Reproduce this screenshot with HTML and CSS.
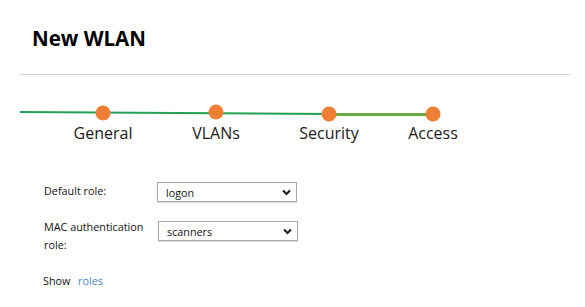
FILE: index.html
```html
<!DOCTYPE html>
<html>
<head>
<meta charset="utf-8">
<link rel="stylesheet" href="styles.css">
</head>
<body>
<div class="page">
  <h1 class="title">New WLAN</h1>
  <div class="rule"></div>
  <div class="stepper">
    <svg class="track" width="585" height="24" viewBox="0 0 585 24">
      <line x1="20" y1="11" x2="329" y2="13" stroke="#23a255" stroke-width="2"/>
      <line x1="329" y1="13.5" x2="433" y2="13.5" stroke="#6aab47" stroke-width="3"/>
      <circle cx="103" cy="12" r="7.5" fill="#ef7f35"/>
      <circle cx="216" cy="11" r="7.5" fill="#ef7f35"/>
      <circle cx="329" cy="13" r="7.5" fill="#ef7f35"/>
      <circle cx="433" cy="13" r="7.5" fill="#ef7f35"/>
    </svg>
    <div class="labels">
      <span class="step s1">General</span>
      <span class="step s2">VLANs</span>
      <span class="step s3">Security</span>
      <span class="step s4">Access</span>
    </div>
  </div>
  <div class="form">
    <div class="row">
      <label class="lbl">Default role:</label>
      <div class="sel">
        <select><option>logon</option></select>
        <svg class="chev" width="9" height="7" viewBox="0 0 9 7"><path d="M1 1.5 L4.5 5 L8 1.5" fill="none" stroke="#222" stroke-width="2.2"/></svg>
      </div>
    </div>
    <div class="row row2">
      <label class="lbl">MAC authentication role:</label>
      <div class="sel sel2">
        <select><option>scanners</option></select>
        <svg class="chev" width="9" height="7" viewBox="0 0 9 7"><path d="M1 1.5 L4.5 5 L8 1.5" fill="none" stroke="#222" stroke-width="2.2"/></svg>
      </div>
    </div>
    <div class="show"><span class="show-txt">Show</span><a class="link" href="#">roles</a></div>
  </div>
</div>
</body>
</html>
```
FILE: styles.css
```css
html, body {
  margin: 0;
  padding: 0;
  background: #fff;
}
.page {
  width: 585px;
  height: 307px;
  font-family: "Open Sans", "Noto Sans", sans-serif;
  color: #111;
  overflow: hidden;
}
.title {
  margin: 0;
  padding: 24px 0 0 32px;
  font-size: 20.5px;
  line-height: 28px;
  font-weight: 700;
  color: #000;
}
.rule {
  margin: 22px 15px 0 20px;
  height: 1px;
  background: #d2d2d2;
}
.stepper {
  margin-top: 26px;
}
.track {
  display: block;
}
.labels {
  display: flex;
  height: 22px;
  margin-top: -3px;
}
.step {
  display: block;
  width: 100px;
  text-align: center;
  font-size: 16px;
  line-height: 22px;
  color: #1a1a1a;
}
.s1 { margin-left: 53px; }
.s2 { margin-left: 13px; }
.s3 { margin-left: 13px; }
.s4 { margin-left: 4px; }
.form {
  padding: 38px 0 0 44px;
  font-family: "Open Sans", "Noto Sans", sans-serif;
  font-size: 10.8px;
}
.row {
  display: flex;
  align-items: flex-start;
}
.lbl {
  width: 113px;
  line-height: 18px;
}
.row2 {
  margin-top: 16px;
}
.row2 .lbl {
  width: 110px;
}
.sel {
  position: relative;
  width: 140px;
  height: 20px;
}
.sel2 {
  margin-left: 4px;
  margin-top: 3px;
}
.sel select {
  appearance: none;
  -webkit-appearance: none;
  width: 140px;
  height: 20px;
  margin: 0;
  padding: 0 0 0 8px;
  border: 1px solid #a8a8a8;
  border-radius: 0;
  background: #fff;
  font-family: "Open Sans", "Noto Sans", sans-serif;
  font-size: 10.8px;
  color: #111;
  box-sizing: border-box;
  box-shadow: 0 1px 1px rgba(0,0,0,0.12);
}
.chev {
  position: absolute;
  right: 6px;
  top: 7px;
  pointer-events: none;
}
.show {
  display: flex;
  margin-top: 18px;
  line-height: 18px;
}
.show-txt {
  width: 35px;
  margin-left: -1px;
}
.link {
  color: #3f86c4;
  text-decoration: none;
}
```
